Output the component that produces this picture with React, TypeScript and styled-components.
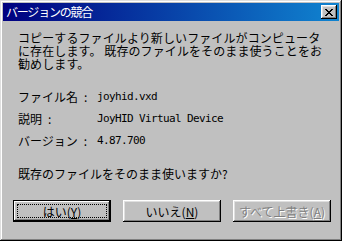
import React from "react";
import styled, { createGlobalStyle } from "styled-components";

const Global = createGlobalStyle`
  html, body {
    margin: 0;
    padding: 0;
    background: #c0c0c0;
  }
  body {
    font-family: "Noto Sans CJK JP", "Liberation Sans", sans-serif;
    font-size: 12px;
    color: #000;
  }
`;

const Window = styled.div`
  width: 342px;
  height: 241px;
  box-sizing: border-box;
  padding: 3px;
  background: #c0c0c0;
  box-shadow: inset -1px -1px #000, inset 1px 1px #dfdfdf,
    inset -2px -2px #808080, inset 2px 2px #fff;
  display: flex;
  flex-direction: column;
`;

const TitleBar = styled.div`
  height: 18px;
  display: flex;
  align-items: center;
  justify-content: space-between;
  padding: 0 2px 0 3px;
  background: linear-gradient(to right, #000080, #1084d0);
  color: #fff;
`;

const Title = styled.span`
  font-size: 12px;
  line-height: 14px;
  letter-spacing: -1.2px;
`;

const CloseButton = styled.div`
  width: 16px;
  height: 14px;
  box-sizing: border-box;
  background: #c0c0c0;
  box-shadow: inset -1px -1px #000, inset 1px 1px #fff,
    inset -2px -2px #808080, inset 2px 2px #dfdfdf;
  display: flex;
  align-items: center;
  justify-content: center;
`;

const Body = styled.div`
  padding: 10px 0 0 15px;
  display: flex;
  flex-direction: column;
`;

const Message = styled.p`
  margin: 0;
  line-height: 13px;
  letter-spacing: 0.1px;
`;

const InfoGrid = styled.div`
  margin-top: 20px;
  display: grid;
  grid-template-columns: 79px auto;
  row-gap: 9px;
  line-height: 13px;
`;

const Label = styled.span`
  white-space: nowrap;
`;

const Colon = styled.span`
  margin-left: 6px;
`;

const Value = styled.span`
  font-family: "DejaVu Sans Mono", "Liberation Mono", monospace;
  font-size: 11px;
  letter-spacing: -0.62px;
  line-height: 13px;
`;

const Question = styled.p`
  margin: 20px 0 0;
  line-height: 13px;
`;

const ButtonRow = styled.div`
  margin-top: 20px;
  margin-left: -5px;
  display: flex;
  gap: 12px;
`;

const Button = styled.div<{ $default?: boolean; $disabled?: boolean }>`
  width: 98px;
  height: 22px;
  box-sizing: border-box;
  display: flex;
  align-items: center;
  justify-content: center;
  background: #c0c0c0;
  color: ${(p) => (p.$disabled ? "#808080" : "#000")};
  text-shadow: ${(p) => (p.$disabled ? "1px 1px #fff" : "none")};
  box-shadow: ${(p) =>
    p.$default
      ? "inset -1px -1px #000, inset 1px 1px #000, inset -2px -2px #000, inset 2px 2px #fff, inset -3px -3px #808080"
      : "inset -1px -1px #000, inset 1px 1px #fff, inset -2px -2px #808080, inset 2px 2px #dfdfdf"};
  position: relative;
  line-height: 13px;
`;

const Focus = styled.span`
  position: absolute;
  left: 4px;
  top: 4px;
  right: 4px;
  bottom: 4px;
  border: 1px dotted #000;
`;

const Key = styled.span`
  text-decoration: underline;
`;

export default function App() {
  return (
    <>
      <Global />
      <Window>
        <TitleBar>
          <Title>バージョンの競合</Title>
          <CloseButton>
            <svg width="8" height="7" viewBox="0 0 8 7">
              <path
                d="M0 0h2v1h1v1h2V1h1V0h2v1H7v1H6v1H5v1h1v1h1v1h1v1H6V6H5V5H3v1H2v1H0V6h1V5h1V4h1V3H2V2H1V1H0z"
                fill="#000"
              />
            </svg>
          </CloseButton>
        </TitleBar>
        <Body>
          <Message>
            コピーするファイルより新しいファイルがコンピュータ
            <br />
            に存在します。 既存のファイルをそのまま使うことをお
            <br />
            勧めします。
          </Message>
          <InfoGrid>
            <Label>
              ファイル名<Colon>:</Colon>
            </Label>
            <Value>joyhid.vxd</Value>
            <Label>
              説明<Colon>:</Colon>
            </Label>
            <Value>JoyHID Virtual Device</Value>
            <Label>
              バージョン<Colon>:</Colon>
            </Label>
            <Value>4.87.700</Value>
          </InfoGrid>
          <Question>既存のファイルをそのまま使いますか?</Question>
          <ButtonRow>
            <Button $default>
              <Focus />
              はい(<Key>Y</Key>)
            </Button>
            <Button>
              いいえ(<Key>N</Key>)
            </Button>
            <Button $disabled>
              すべて上書き(<Key>A</Key>)
            </Button>
          </ButtonRow>
        </Body>
      </Window>
    </>
  );
}
